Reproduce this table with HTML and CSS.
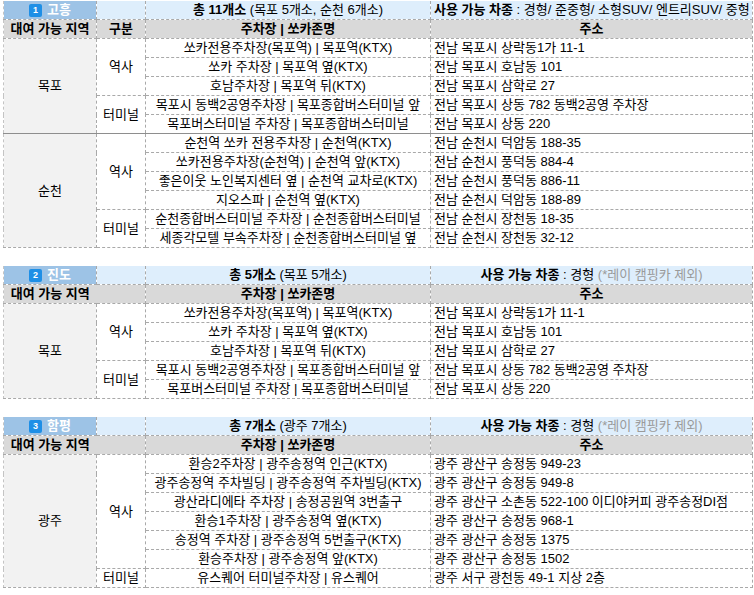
FILE: index.html
```html
<!DOCTYPE html>
<html lang="ko">
<head>
<meta charset="utf-8">
<link rel="stylesheet" href="styles.css">
</head>
<body>
<div class="sheet">
<table class="zone">
  <colgroup><col class="c1"><col class="c2"><col class="c3"><col class="c4"></colgroup>
  <tr class="title">
    <td class="t-area"><span class="badge">1</span>고흥</td>
    <td class="t-blank"></td>
    <td class="t-count"><b>총 11개소</b> (목포 5개소, 순천 6개소)</td>
    <td class="t-cars left"><b>사용 가능 차종</b> : 경형/ 준중형/ 소형SUV/ 엔트리SUV/ 중형</td>
  </tr>
  <tr class="head">
    <td>대여 가능 지역</td><td>구분</td><td>주차장 | 쏘카존명</td><td>주소</td>
  </tr>
  <tr>
    <td class="region" rowspan="5">목포</td><td class="kind" rowspan="3">역사</td>
    <td class="name">쏘카전용주차장(목포역) | 목포역(KTX)</td><td class="addr">전남 목포시 상락동1가 11-1</td>
  </tr>
  <tr><td class="name">쏘카 주차장 | 목포역 옆(KTX)</td><td class="addr">전남 목포시 호남동 101</td></tr>
  <tr><td class="name">호남주차장 | 목포역 뒤(KTX)</td><td class="addr">전남 목포시 삼학로 27</td></tr>
  <tr>
    <td class="kind" rowspan="2">터미널</td>
    <td class="name">목포시 동백2공영주차장 | 목포종합버스터미널 앞</td><td class="addr">전남 목포시 상동 782 동백2공영 주차장</td>
  </tr>
  <tr><td class="name">목포버스터미널 주차장 | 목포종합버스터미널</td><td class="addr">전남 목포시 상동 220</td></tr>
  <tr class="split">
    <td class="region" rowspan="6">순천</td><td class="kind" rowspan="4">역사</td>
    <td class="name">순천역 쏘카 전용주차장 | 순천역(KTX)</td><td class="addr">전남 순천시 덕암동 188-35</td>
  </tr>
  <tr><td class="name">쏘카전용주차장(순천역) | 순천역 앞(KTX)</td><td class="addr">전남 순천시 풍덕동 884-4</td></tr>
  <tr><td class="name">좋은이웃 노인복지센터 옆 | 순천역 교차로(KTX)</td><td class="addr">전남 순천시 풍덕동 886-11</td></tr>
  <tr><td class="name">지오스파 | 순천역 옆(KTX)</td><td class="addr">전남 순천시 덕암동 188-89</td></tr>
  <tr>
    <td class="kind" rowspan="2">터미널</td>
    <td class="name">순천종합버스터미널 주차장 | 순천종합버스터미널</td><td class="addr">전남 순천시 장천동 18-35</td>
  </tr>
  <tr><td class="name">세종각모텔 부속주차장 | 순천종합버스터미널 옆</td><td class="addr">전남 순천시 장천동 32-12</td></tr>
</table>

<table class="zone">
  <colgroup><col class="c1"><col class="c2"><col class="c3"><col class="c4"></colgroup>
  <tr class="title">
    <td class="t-area"><span class="badge">2</span>진도</td>
    <td class="t-blank"></td>
    <td class="t-count"><b>총 5개소</b> (목포 5개소)</td>
    <td class="t-cars"><b>사용 가능 차종</b> : 경형 <span class="muted">(*레이 캠핑카 제외)</span></td>
  </tr>
  <tr class="head">
    <td class="nosplit">대여 가능 지역</td><td class="joined"></td><td>주차장 | 쏘카존명</td><td>주소</td>
  </tr>
  <tr>
    <td class="region" rowspan="5">목포</td><td class="kind" rowspan="3">역사</td>
    <td class="name">쏘카전용주차장(목포역) | 목포역(KTX)</td><td class="addr">전남 목포시 상락동1가 11-1</td>
  </tr>
  <tr><td class="name">쏘카 주차장 | 목포역 옆(KTX)</td><td class="addr">전남 목포시 호남동 101</td></tr>
  <tr><td class="name">호남주차장 | 목포역 뒤(KTX)</td><td class="addr">전남 목포시 삼학로 27</td></tr>
  <tr>
    <td class="kind" rowspan="2">터미널</td>
    <td class="name">목포시 동백2공영주차장 | 목포종합버스터미널 앞</td><td class="addr">전남 목포시 상동 782 동백2공영 주차장</td>
  </tr>
  <tr><td class="name">목포버스터미널 주차장 | 목포종합버스터미널</td><td class="addr">전남 목포시 상동 220</td></tr>
</table>

<table class="zone">
  <colgroup><col class="c1"><col class="c2"><col class="c3"><col class="c4"></colgroup>
  <tr class="title">
    <td class="t-area"><span class="badge">3</span>함평</td>
    <td class="t-blank"></td>
    <td class="t-count"><b>총 7개소</b> (광주 7개소)</td>
    <td class="t-cars"><b>사용 가능 차종</b> : 경형 <span class="muted">(*레이 캠핑카 제외)</span></td>
  </tr>
  <tr class="head">
    <td class="nosplit">대여 가능 지역</td><td class="joined"></td><td>주차장 | 쏘카존명</td><td>주소</td>
  </tr>
  <tr>
    <td class="region" rowspan="7">광주</td><td class="kind" rowspan="6">역사</td>
    <td class="name">환승2주차장 | 광주송정역 인근(KTX)</td><td class="addr">광주 광산구 송정동 949-23</td>
  </tr>
  <tr><td class="name">광주송정역 주차빌딩 | 광주송정역 주차빌딩(KTX)</td><td class="addr">광주 광산구 송정동 949-8</td></tr>
  <tr><td class="name">광산라디에타 주차장 | 송정공원역 3번출구</td><td class="addr">광주 광산구 소촌동 522-100 이디야커피 광주송정DI점</td></tr>
  <tr><td class="name">환승1주차장 | 광주송정역 옆(KTX)</td><td class="addr">광주 광산구 송정동 968-1</td></tr>
  <tr><td class="name">송정역 주차장 | 광주송정역 5번출구(KTX)</td><td class="addr">광주 광산구 송정동 1375</td></tr>
  <tr><td class="name">환승주차장 | 광주송정역 앞(KTX)</td><td class="addr">광주 광산구 송정동 1502</td></tr>
  <tr>
    <td class="kind">터미널</td>
    <td class="name">유스퀘어 터미널주차장 | 유스퀘어</td><td class="addr">광주 서구 광천동 49-1 지상 2층</td>
  </tr>
</table>
</div>
</body>
</html>
```

FILE: styles.css
```css
html, body {
  margin: 0;
  padding: 0;
  background: #ffffff;
}

.sheet {
  padding: 1px 2px 0 3px;
  display: flex;
  flex-direction: column;
  gap: 18px;
  font-family: "Liberation Sans", "Noto Sans CJK KR", sans-serif;
  font-size: 13px;
  color: #000000;
}

.zone {
  width: 749px;
  table-layout: fixed;
  border-collapse: collapse;
}

.c1 { width: 93px; }
.c2 { width: 49px; }
.c3 { width: 285px; }
.c4 { width: 322px; }

.zone td {
  height: 18px;
  padding: 0 3px;
  line-height: 18px;
  border: 1px dashed #a9a9a9;
  white-space: nowrap;
  overflow: hidden;
  text-align: center;
  vertical-align: middle;
}

.zone tr:first-child td {
  border-top: none;
}

.zone td:first-child {
  border-left: 1px dashed #c4c4c4;
}

.title td {
  background: #deeefc;
}

.title .t-area {
  background: #9dc3e6;
  color: #ffffff;
  font-weight: bold;
  font-size: 13px;
}

.badge {
  display: inline-block;
  width: 13px;
  height: 13px;
  line-height: 13px;
  margin-right: 5px;
  border-radius: 2px;
  background: #1e8fe6;
  color: #ffffff;
  font-size: 9px;
  font-weight: bold;
  text-align: center;
  vertical-align: 1px;
}

.title .left {
  text-align: left;
}

.muted {
  color: #9a9a9a;
}

.head td {
  background: #d9d9d9;
  font-weight: bold;
}

.head .nosplit {
  border-right: none;
}

.head .joined {
  border-left: none;
}

.region {
  background: #f2f2f2;
}

.kind {
  background: #ffffff;
}

.name {
  text-align: center;
  text-overflow: clip;
}

.zone td.addr {
  text-align: left;
}

.split td {
  border-top: 1px solid #8e8e8e;
}
```
